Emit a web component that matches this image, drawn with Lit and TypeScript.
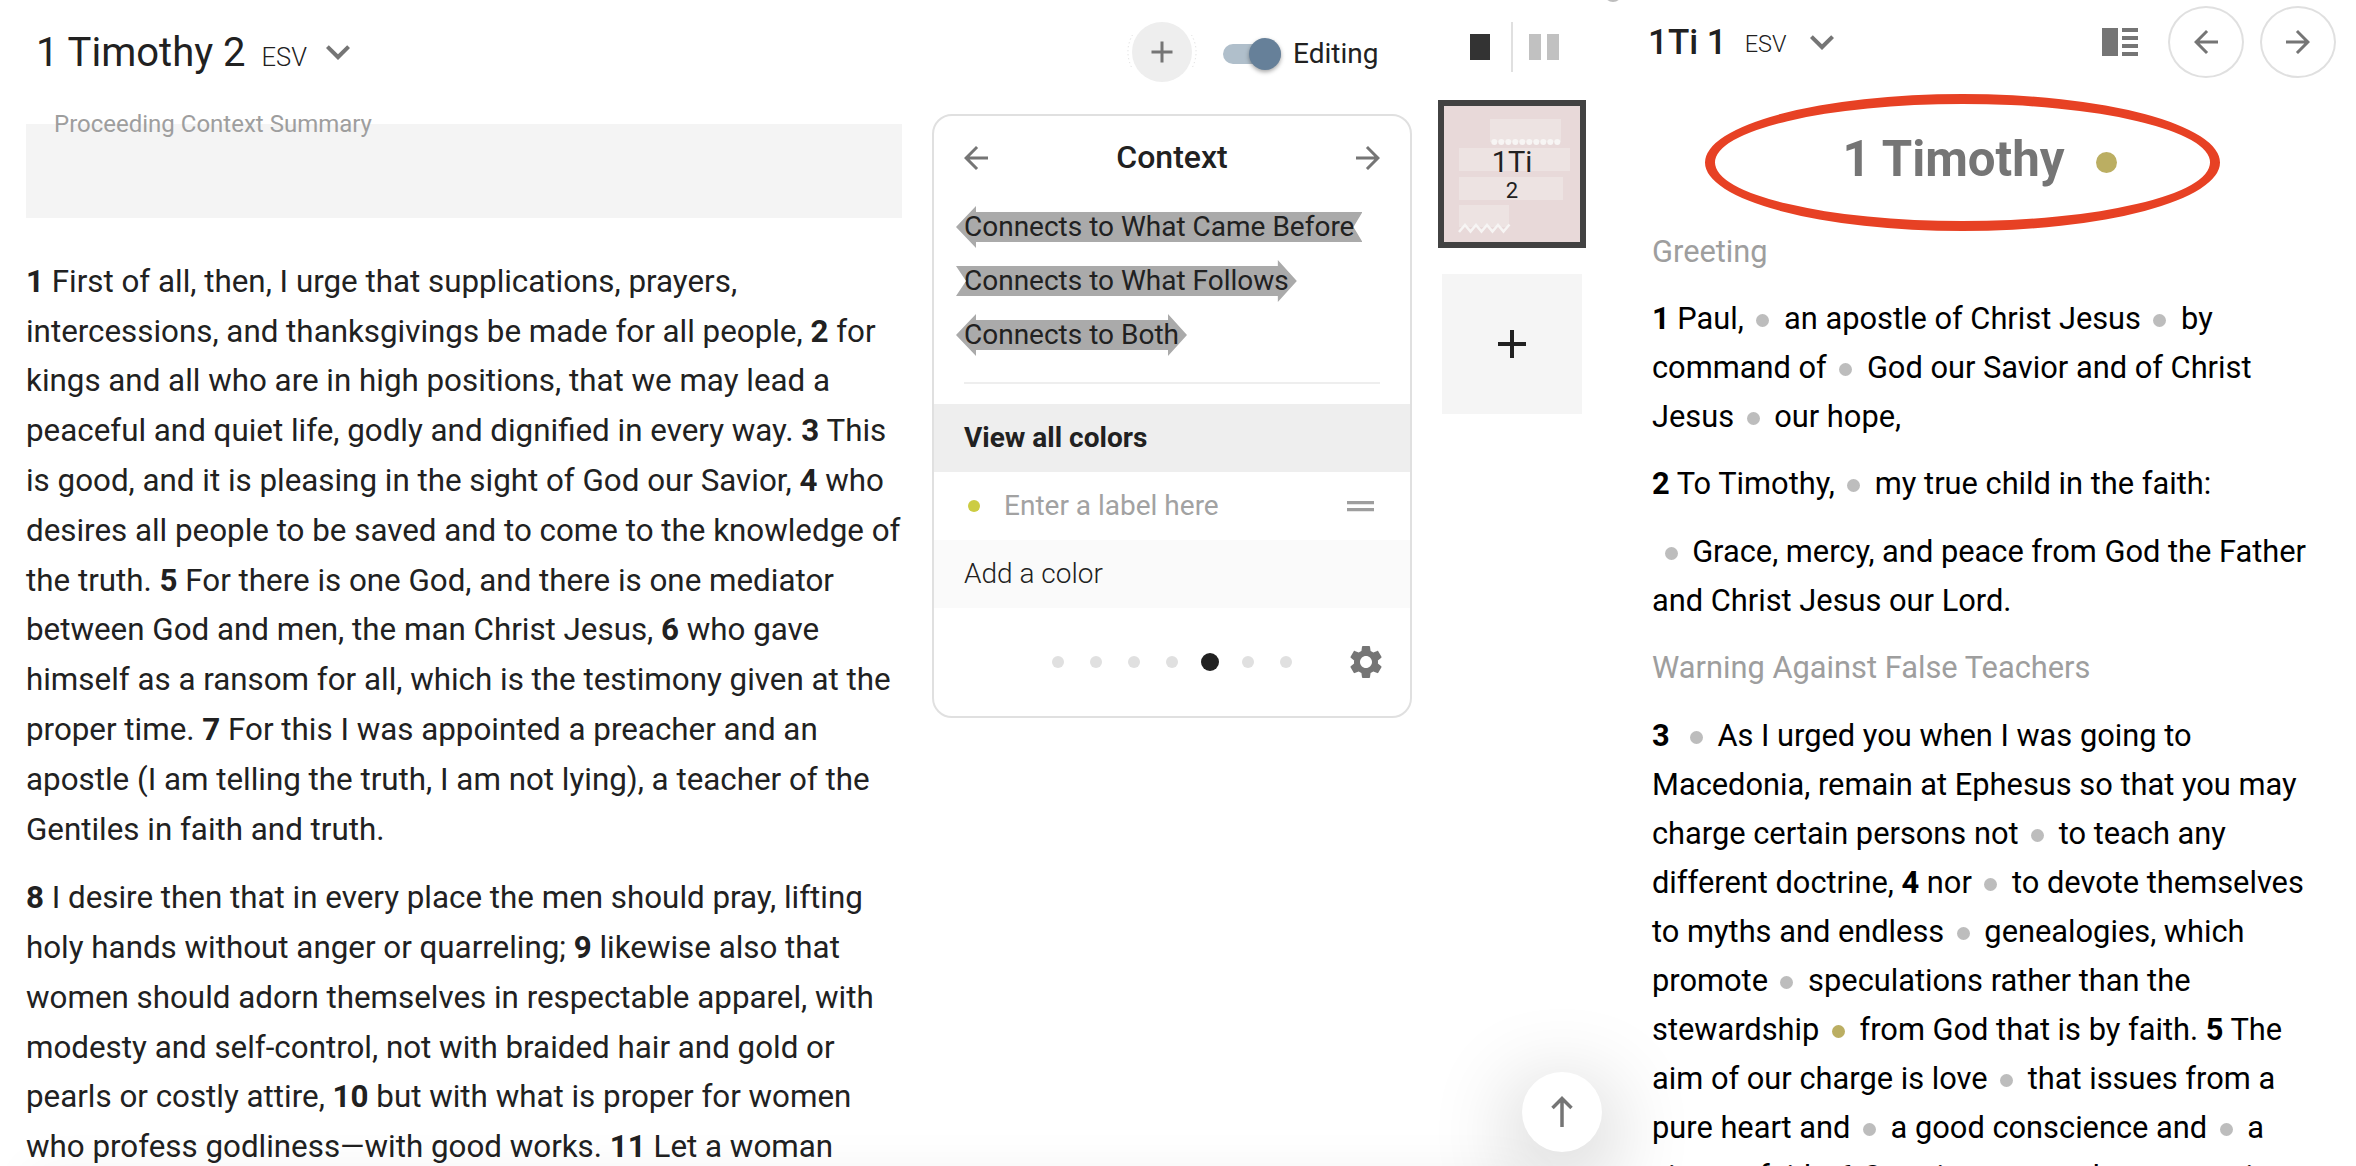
import { LitElement, html, css, svg } from "lit";
import { customElement } from "lit/decorators.js";

type Piece = string | { v: number } | { dot: "gray" | "gold" };

const v = (n: number): Piece => ({ v: n });
const dot: Piece = { dot: "gray" };
const gold: Piece = { dot: "gold" };

const chapterTwo: Piece[][] = [
  [
    v(1), " First of all, then, I urge that supplications, prayers, intercessions, and thanksgivings be made for all people, ",
    v(2), " for kings and all who are in high positions, that we may lead a peaceful and quiet life, godly and dignified in every way. ",
    v(3), " This is good, and it is pleasing in the sight of God our Savior, ",
    v(4), " who desires all people to be saved and to come to the knowledge of the truth. ",
    v(5), " For there is one God, and there is one mediator between God and men, the man Christ Jesus, ",
    v(6), " who gave himself as a ransom for all, which is the testimony given at the proper time. ",
    v(7), " For this I was appointed a preacher and an apostle (I am telling the truth, I am not lying), a teacher of the Gentiles in faith and truth.",
  ],
  [
    v(8), " I desire then that in every place the men should pray, lifting holy hands without anger or quarreling; ",
    v(9), " likewise also that women should adorn themselves in respectable apparel, with modesty and self-control, not with braided hair and gold or pearls or costly attire, ",
    v(10), " but with what is proper for women who profess godliness—with good works. ",
    v(11), " Let a woman",
  ],
];

const greeting: Piece[][] = [
  [v(1), " Paul,", dot, " an apostle of Christ Jesus", dot, " by command of", dot, " God our Savior and of Christ Jesus", dot, " our hope,"],
  [v(2), " To Timothy,", dot, " my true child in the faith:"],
  [dot, " Grace, mercy, and peace from God the Father and Christ Jesus our Lord."],
];

const warning: Piece[][] = [
  [
    v(3), " ", dot, " As I urged you when I was going to Macedonia, remain at Ephesus so that you may charge certain persons not",
    dot, " to teach any different doctrine, ", v(4), " nor", dot, " to devote themselves to myths and endless",
    dot, " genealogies, which promote", dot, " speculations rather than the stewardship",
    gold, " from God that is by faith. ", v(5), " The aim of our charge is love", dot, " that issues from a pure heart and",
    dot, " a good conscience and", dot, " a sincere faith. ", v(6), " Certain persons, by", dot, " swerving",
  ],
];

const renderVerses = (paragraphs: Piece[][]) =>
  paragraphs.map(
    (p) => html`<p>${p.map((piece) => {
      if (typeof piece === "string") return piece;
      if ("v" in piece) return html`<b>${piece.v}</b>`;
      return html`<i class="dot ${piece.dot}"></i>`;
    })}</p>`
  );

const back = svg`<path d="M20 11H7.8l5.6-5.6L12 4l-8 8 8 8 1.4-1.4L7.8 13H20z" />`;
const forward = svg`<path d="M4 11h12.2l-5.6-5.6L12 4l8 8-8 8-1.4-1.4 5.6-5.6H4z" />`;
const plus = svg`<path d="M19 13h-6v6h-2v-6H5v-2h6V5h2v6h6z" />`;
const chevron = svg`<path d="M7.41 8.59L12 13.17l4.59-4.58L18 10l-6 6-6-6z" />`;
const gear = svg`<path d="M19.14 12.94c.04-.3.06-.61.06-.94 0-.32-.02-.64-.07-.94l2.03-1.58c.18-.14.23-.41.12-.61l-1.92-3.32c-.12-.22-.37-.29-.59-.22l-2.39.96c-.5-.38-1.03-.7-1.62-.94l-.36-2.54c-.04-.24-.24-.41-.48-.41h-3.84c-.24 0-.43.17-.47.41l-.36 2.54c-.59.24-1.13.57-1.62.94l-2.39-.96c-.22-.08-.47 0-.59.22L2.74 8.87c-.12.21-.08.47.12.61l2.03 1.58c-.05.3-.09.63-.09.94s.02.64.07.94l-2.03 1.58c-.18.14-.23.41-.12.61l1.92 3.32c.12.22.37.29.59.22l2.39-.96c.5.38 1.03.7 1.62.94l.36 2.54c.05.24.24.41.48.41h3.84c.24 0 .44-.17.47-.41l.36-2.54c.59-.24 1.13-.56 1.62-.94l2.39.96c.22.08.47 0 .59-.22l1.92-3.32c.12-.22.07-.47-.12-.61l-2.01-1.58zM12 15.6c-1.98 0-3.6-1.62-3.6-3.6s1.62-3.6 3.6-3.6 3.6 1.62 3.6 3.6-1.62 3.6-3.6 3.6z" />`;

const icon = (shape: unknown, size = 36) =>
  html`<svg class="icon" width=${size} height=${size} viewBox="0 0 24 24">${shape}</svg>`;

@customElement("context-card")
export class ContextCard extends LitElement {
  static styles = css`
    :host {
      display: block;
      box-sizing: border-box;
      width: 480px;
      height: 604px;
      border: 2px solid #e0e0e0;
      border-radius: 20px;
      font-size: 28px;
    }
    svg {
      display: block;
      fill: #757575;
    }
    header {
      display: flex;
      align-items: center;
      justify-content: space-between;
      height: 84px;
      padding: 0 24px;
      font-size: 32px;
      font-weight: 500;
    }
    header span {
      padding-bottom: 2px;
    }
    .arrows {
      display: flex;
      flex-direction: column;
      gap: 12px;
      padding: 6px 22px 26px;
    }
    .arrow {
      width: max-content;
      height: 42px;
      line-height: 41px;
      padding: 0 8px;
      background: #aaa;
    }
    .before {
      clip-path: polygon(
        0 50%, 20px 0, 20px 6px, 100% 6px, calc(100% - 9px) 50%,
        100% 36px, 20px 36px, 20px 100%
      );
    }
    .follows {
      clip-path: polygon(
        0 6px, calc(100% - 19px) 6px, calc(100% - 19px) 0, 100% 50%,
        calc(100% - 19px) 100%, calc(100% - 19px) 36px, 0 36px, 10px 50%
      );
    }
    .both {
      clip-path: polygon(
        0 50%, 20px 0, 20px 6px, calc(100% - 19px) 6px, calc(100% - 19px) 0, 100% 50%,
        calc(100% - 19px) 100%, calc(100% - 19px) 36px, 20px 36px, 20px 100%
      );
    }
    hr {
      height: 2px;
      margin: 0 30px 20px;
      border: 0;
      background: #eee;
    }
    .row {
      display: flex;
      align-items: center;
      height: 68px;
      line-height: 68px;
      padding: 0 30px;
    }
    .row span {
      height: 69px;
    }
    .all {
      background: #eee;
      font-weight: 700;
    }
    .label {
      color: #a2a2a2;
    }
    .label i {
      width: 12px;
      height: 12px;
      margin: 0 24px 0 4px;
      border-radius: 50%;
      background: #cccc42;
    }
    .label svg {
      margin-left: auto;
      margin-right: 6px;
      fill: #9e9e9e;
    }
    .add {
      background: #fafafa;
      font-weight: 300;
    }
    footer {
      display: flex;
      align-items: center;
      height: 108px;
      padding-left: 118px;
    }
    .page {
      width: 12px;
      height: 12px;
      margin-right: 26px;
      border-radius: 50%;
      background: #e0e0e0;
    }
    .page.on {
      width: 18px;
      height: 18px;
      margin: 0 23px 0 -3px;
      background: #212121;
    }
    footer svg {
      margin-left: 28px;
    }
  `;

  render() {
    return html`
      <header>${icon(back)}<span>Context</span>${icon(forward)}</header>
      <div class="arrows">
        <div class="arrow before">Connects to What Came Before</div>
        <div class="arrow follows">Connects to What Follows</div>
        <div class="arrow both">Connects to Both</div>
      </div>
      <hr />
      <div class="row all"><span>View all colors</span></div>
      <div class="row label">
        <i></i><span>Enter a label here</span>
        <svg width="27" height="12"><path d="M0 1h27v3.300H0zM0 8h27v3.300H0z" /></svg>
      </div>
      <div class="row add"><span>Add a color</span></div>
      <footer>
        ${[0, 1, 2, 3, 4, 5, 6].map((n) => html`<span class="page ${n === 4 ? "on" : ""}"></span>`)}
        ${icon(gear, 40)}
      </footer>
    `;
  }
}

@customElement("chapter-tile")
export class ChapterTile extends LitElement {
  static styles = css`
    :host {
      display: grid;
      box-sizing: border-box;
      width: 148px;
      height: 148px;
      border: 6px solid #424242;
      background: #e8d9d9;
    }
    svg,
    .name {
      grid-area: 1 / 1;
    }
    .name {
      display: flex;
      flex-direction: column;
      align-items: center;
      padding-top: 37px;
      font-size: 29px;
      line-height: 38px;
    }
    .name small {
      font-size: 22px;
      line-height: 20px;
    }
  `;

  render() {
    return html`
      <svg width="136" height="136">
        <path fill="#ede3e2" d="M46 13h71v23H46zM15 42h111v23H15zM15 71h104v23H15zM15 99h50v22H15z" />
        ${[...Array(10).keys()].map((n) => svg`<circle cx=${50.3 + n * 7} cy="36" r="3" fill="#f7f5f4" />`)}
        <path
          fill="none"
          stroke="#f7f5f4"
          stroke-width="2.500"
          d="M15 126l6-7 5.500 6.500 5.500-6.500 5.500 6.500 5.500-6.500 5.500 6.500 5.500-6.500 5.500 6.500 6-7"
        />
      </svg>
      <div class="name">1Ti<small>2</small></div>
    `;
  }
}

@customElement("app-root")
export class AppRoot extends LitElement {
  static styles = css`
    :host {
      display: flex;
      position: relative;
      width: 2356px;
      height: 1166px;
      overflow: hidden;
      background: #fff;
      color: #212121;
      font-family: Roboto, sans-serif;
    }
    .icon {
      display: block;
      fill: #757575;
    }
    .reader {
      width: 902px;
      height: 1166px;
      box-sizing: border-box;
      padding-left: 26px;
      font-size: 31.33px;
      line-height: 49.8px;
    }
    .reader p {
      margin: 0 0 18.7px;
    }
    .title {
      display: flex;
      align-items: baseline;
      height: 124px;
      box-sizing: border-box;
      padding: 28px 0 0 10px;
      font-size: 40px;
    }
    .title small {
      margin-left: 16px;
      font-size: 25.500px;
      font-weight: 300;
    }
    .title .icon {
      align-self: flex-start;
      margin: 0 0 0 7px;
    }
    .summary {
      height: 94px;
      margin-bottom: 38.900px;
      padding-left: 28px;
      background: #f4f4f4;
      color: #9e9e9e;
      font-size: 24px;
      line-height: 0;
    }
    .tools {
      width: 480px;
      margin-left: 30px;
    }
    .toolbar {
      display: flex;
      align-items: center;
      height: 104px;
      margin-bottom: 10px;
      padding-left: 195px;
      font-size: 28px;
    }
    .switch {
      display: flex;
      align-items: center;
      width: 58px;
      height: 20px;
      margin: 4px 12px 0 26px;
      border-radius: 10px;
      background: #b0bfcb;
    }
    .knob {
      flex: none;
      width: 32px;
      height: 32px;
      margin-left: 26px;
      border-radius: 50%;
      background: #668099;
      box-shadow: 0 2px 4px rgba(0, 0, 0, 0.35);
    }
    .toolbar span {
      padding-top: 3px;
    }
    .tiles {
      display: flex;
      flex-direction: column;
      align-items: center;
      width: 148px;
      margin-left: 26px;
    }
    .views {
      padding: 22px 0 28px 4px;
    }
    .new {
      display: grid;
      place-items: center;
      width: 140px;
      height: 140px;
      margin-top: 26px;
      background: #f5f5f5;
    }
    .new .icon {
      fill: #212121;
    }
    .companion {
      width: 665px;
      margin-left: 66px;
      font-size: 30.8px;
      line-height: 49px;
      color: #000;
    }
    .companion p,
    .companion h3 {
      margin: 0 0 18.400px;
    }
    .companion h3 {
      color: #9e9e9e;
      font-weight: 400;
      font-size: inherit;
    }
    .bar {
      display: flex;
      align-items: center;
      width: 688px;
      height: 84px;
      margin-left: -4px;
      color: #212121;
      font-size: 35px;
      font-weight: 500;
    }
    .bar small {
      margin: 5px 0 0 18px;
      font-size: 23.500px;
      font-weight: 300;
    }
    .bar > .icon {
      margin-left: 11px;
    }
    .columns {
      margin: 0 30px 0 auto;
    }
    .nav {
      display: grid;
      place-items: center;
      box-sizing: border-box;
      width: 76px;
      height: 72px;
      border: 2px solid #e0e0e0;
      border-radius: 50%;
    }
    .nav + .nav {
      margin-left: 16px;
    }
    h1 {
      display: flex;
      align-items: center;
      justify-content: center;
      height: 142.700px;
      margin: 0;
      box-sizing: border-box;
      padding-right: 9px;
      color: #757575;
      font-size: 49.2px;
    }
    h1 i {
      width: 21px;
      height: 21px;
      margin: 14px 0 0 32px;
      border-radius: 50%;
      background: #bbae62;
    }
    h1 span {
      padding-top: 8px;
    }
    .dot {
      display: inline-block;
      width: 13px;
      height: 13px;
      margin: 0 7px 0 12.500px;
      border-radius: 50%;
      vertical-align: 2px;
      background: #bdbdbd;
    }
    .gold {
      background: #bbae62;
    }
    .ring {
      position: absolute;
      left: 1705px;
      top: 94px;
      box-sizing: border-box;
      width: 515px;
      height: 137px;
      border: 10px solid #e74124;
      border-radius: 50%;
    }
    .handle {
      position: absolute;
      left: 1604px;
      top: -16px;
      width: 18px;
      height: 18px;
      border-radius: 50%;
      background: #bdbdbd;
    }
    .fade {
      position: absolute;
      left: 30px;
      top: 1170px;
      width: 1500px;
      height: 60px;
      box-shadow: 0 0 50px rgba(0, 0, 0, 0.05);
    }
    .top {
      position: absolute;
      left: 1522px;
      top: 1072px;
      display: grid;
      place-items: center;
      width: 80px;
      height: 80px;
      border-radius: 50%;
      background: #fff;
      box-shadow: 0 20px 90px rgba(0, 0, 0, 0.3);
    }
  `;

  render() {
    return html`
      <section class="reader">
        <div class="title">1 Timothy 2<small>ESV</small>${icon(chevron, 48)}</div>
        <div class="summary">Proceeding Context Summary</div>
        ${renderVerses(chapterTwo)}
      </section>
      <section class="tools">
        <div class="toolbar">
          <svg width="70" height="70" viewBox="0 0 70 70">
            <circle cx="35" cy="35" r="30" fill="#eee" />
            <path
              fill="none"
              stroke="#d8d8d8"
              stroke-dasharray="1 3"
              d="M5.500 18a34 34 0 0 0 0 34M64.500 18a34 34 0 0 1 0 34"
            />
            <path fill="#757575" d="M33.500 24.500h3v9h9v3h-9v9h-3v-9h-9v-3h9z" />
          </svg>
          <div class="switch"><div class="knob"></div></div>
          <span>Editing</span>
        </div>
        <context-card></context-card>
      </section>
      <section class="tiles">
        <svg class="views" width="90" height="50" viewBox="0 0 90 50">
          <path fill="#333" d="M1 12h20v26H1z" />
          <path fill="#e0e0e0" d="M42 0h2v50h-2z" />
          <path fill="#c1c1c1" d="M60 12h12v26H60zM78 12h12v26H78z" />
        </svg>
        <chapter-tile></chapter-tile>
        <div class="new">${icon(plus, 48)}</div>
      </section>
      <section class="companion">
        <div class="bar">
          1Ti 1<small>ESV</small>${icon(chevron, 48)}
          <svg class="columns" width="36" height="28">
            <path fill="#757575" d="M0 0h16v28H0zM20 0h16v4H20zM20 8h16v4H20zM20 16h16v4H20zM20 24h16v4H20z" />
          </svg>
          <div class="nav">${icon(back)}</div>
          <div class="nav">${icon(forward)}</div>
        </div>
        <h1><span>1 Timothy</span><i></i></h1>
        <h3>Greeting</h3>
        ${renderVerses(greeting)}
        <h3>Warning Against False Teachers</h3>
        ${renderVerses(warning)}
      </section>
      <div class="ring"></div>
      <div class="handle"></div>
      <div class="fade"></div>
      <div class="top">
        <svg width="24" height="32">
          <path fill="none" stroke="#757575" stroke-width="3.500" d="M12 31V3M2.500 12L12 2.500 21.500 12" />
        </svg>
      </div>
    `;
  }
}
